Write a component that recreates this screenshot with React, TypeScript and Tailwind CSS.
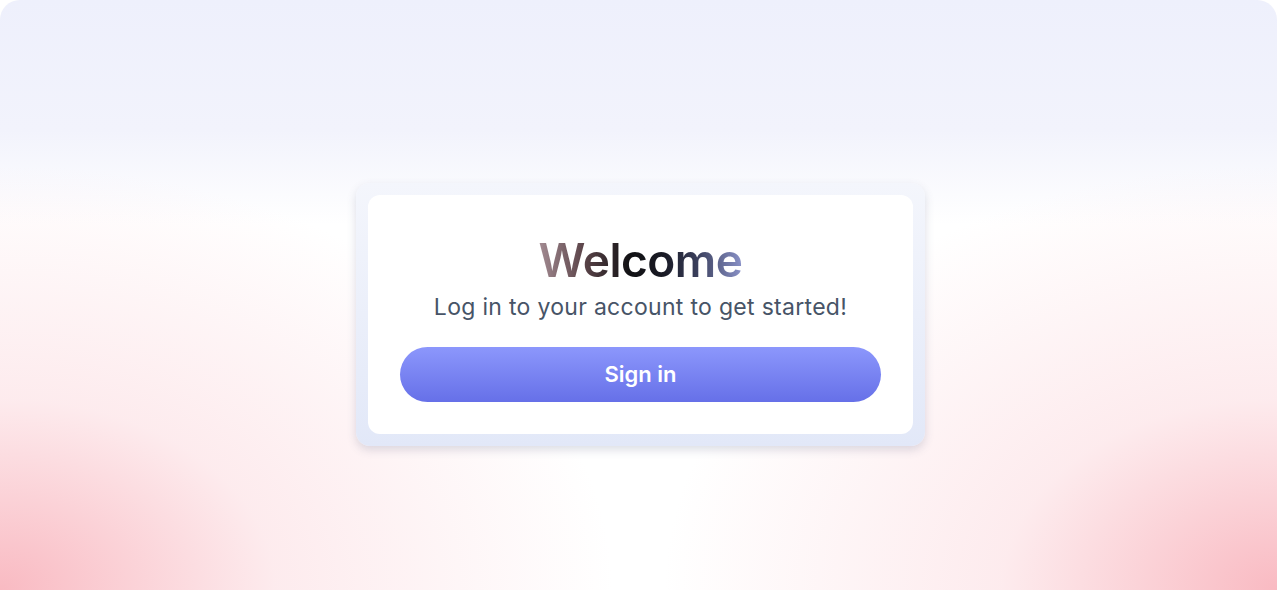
export default function App() {
  return (
    <div className="h-[590px] w-full bg-white font-['Inter',sans-serif]">
      <div className="flex h-full w-full items-center justify-center overflow-hidden rounded-t-[20px] bg-[radial-gradient(ellipse_48%_72%_at_0%_100%,#f9bac2_0%,rgba(252,222,226,0.6)_45%,rgba(255,255,255,0)_100%),radial-gradient(ellipse_48%_72%_at_100%_100%,#f9bac2_0%,rgba(252,222,226,0.6)_45%,rgba(255,255,255,0)_100%),linear-gradient(to_bottom,#eef0fc_0%,#f2f3fc_22%,#ffffff_38%,#ffffff_100%)]">
        <div className="ml-[4px] mt-[39px] w-[569px] rounded-[14px] bg-[linear-gradient(to_bottom,#f4f6fc,#e2e8f8)] p-3 shadow-[0_4px_10px_rgba(60,70,110,0.18)]">
          <div className="flex flex-col items-center rounded-[12px] bg-white px-8 pb-8 pt-[39px]">
            <h1 className="bg-[linear-gradient(to_right,#a38b92_0%,#5b4449_22%,#111114_45%,#1a1b26_62%,#3a3f5c_78%,#8a92c8_100%)] bg-clip-text text-[46px] font-semibold leading-[52px] tracking-[-0.5px] text-transparent">
              Welcome
            </h1>
            <p className="mt-[6px] text-[23px] leading-[30px] tracking-[0.3px] text-[#475467]">
              Log in to your account to get started!
            </p>
            <button className="mt-[25px] h-[55px] w-full rounded-full bg-[linear-gradient(to_bottom,#8c97fc,#6670e8)] text-[22px] font-semibold text-white">
              Sign in
            </button>
          </div>
        </div>
      </div>
    </div>
  )
}
